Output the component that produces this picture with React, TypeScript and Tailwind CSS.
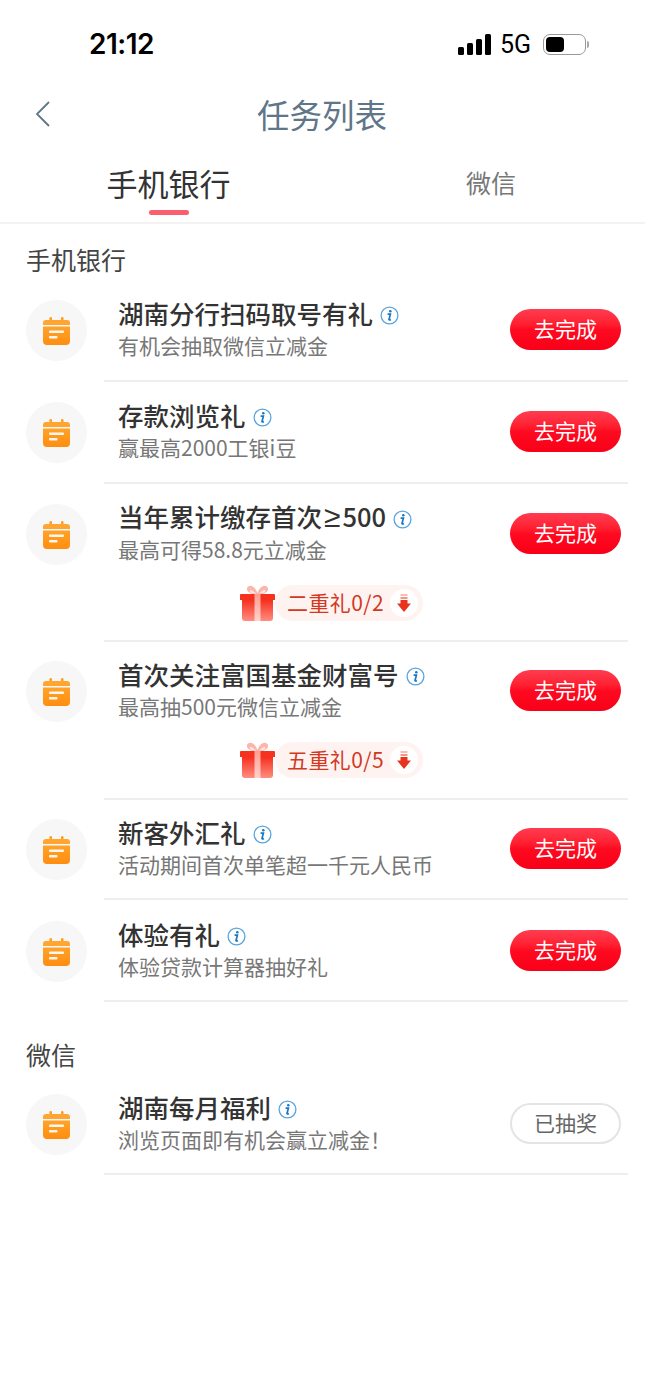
import type { ReactNode } from "react";

const CJK = "font-['Noto_Sans_CJK_SC','Noto_Sans',sans-serif]";

function CalendarIcon() {
  return (
    <svg width="27" height="28" viewBox="0 0 27 28">
      <defs>
        <linearGradient id="cal" x1="0" y1="0" x2="0" y2="1">
          <stop offset="0" stopColor="#ffa32a" />
          <stop offset="1" stopColor="#ff8d0f" />
        </linearGradient>
      </defs>
      <rect x="6.5" y="0" width="2.5" height="5" rx="1.2" fill="#ff9c22" />
      <rect x="18" y="0" width="2.5" height="5" rx="1.2" fill="#ff9c22" />
      <path d="M3 3h21a3 3 0 0 1 3 3v2H0V6a3 3 0 0 1 3-3z" fill="#ffa530" />
      <path d="M0 9.500h27V24a4 4 0 0 1-4 4H4a4 4 0 0 1-4-4z" fill="url(#cal)" />
      <rect x="6" y="13.500" width="15" height="2.500" rx="1" fill="#fff" fillOpacity="0.92" />
      <rect x="6" y="19" width="8.500" height="2.500" rx="1" fill="#fff" fillOpacity="0.92" />
    </svg>
  );
}

function InfoIcon() {
  return (
    <svg width="19" height="19" viewBox="0 0 19 19" className="mt-[4px] shrink-0">
      <circle cx="9.500" cy="9.500" r="8.400" fill="#fff" stroke="#5aa5de" strokeWidth="1.300" />
      <circle cx="10.300" cy="5.200" r="1.300" fill="#1a78c2" />
      <path d="M7.600 8.200h2.800l-1.400 5.300c-.1.500.4.700 1.900.1" fill="none" stroke="#1a78c2" strokeWidth="1.700" />
    </svg>
  );
}

function GiftIcon() {
  return (
    <svg width="35" height="36" viewBox="0 0 35 36" className="relative z-10 shrink-0">
      <defs>
        <linearGradient id="box" x1="0" y1="0" x2="0" y2="1">
          <stop offset="0" stopColor="#f5301f" />
          <stop offset="1" stopColor="#ff8d80" />
        </linearGradient>
        <linearGradient id="rib" x1="0" y1="0" x2="0" y2="1">
          <stop offset="0" stopColor="#ff9d90" />
          <stop offset="1" stopColor="#ffd3cd" />
        </linearGradient>
      </defs>
      <path
        d="M17.500 9.500C12 9.500 6.500 7.500 7 3.500 7.500 .5 11 0 13.500 2c2 1.500 3.300 4 4 6 .7-2 2-4.500 4-6C24 0 27.500.5 28 3.500c.5 4-5 6-10.500 6z"
        fill="#fbb5aa"
      />
      <path d="M11 5c2 1 4 2.500 5 3.500-2.500 0-5-.5-6-1.500-.7-1 0-2.500 1-2zM24 5c-2 1-4 2.500-5 3.500 2.500 0 5-.5 6-1.500.7-1 0-2.500-1-2z" fill="#fff" fillOpacity="0.7" />
      <path d="M1 9h33a1 1 0 0 1 1 1v5H0v-5a1 1 0 0 1 1-1z" fill="#f6321f" />
      <path d="M2 15h31v18a3 3 0 0 1-3 3H5a3 3 0 0 1-3-3z" fill="url(#box)" />
      <rect x="14.500" y="9" width="6" height="27" fill="url(#rib)" />
    </svg>
  );
}

function ArrowIcon() {
  return (
    <svg width="14" height="18" viewBox="0 0 14 18">
      <rect x="3.500" y="0" width="7" height="2" fill="#fbbcb3" />
      <rect x="3.500" y="3" width="7" height="2" fill="#f89386" />
      <path d="M3.500 6h7v3.500H14L7 18 0 9.500h3.500z" fill="#e8331f" />
    </svg>
  );
}

function StatusBar() {
  return (
    <div className="flex h-[88px] items-center justify-between pl-[89px] pr-[56px]">
      <span className="font-['Inter',sans-serif] text-[28px] font-semibold leading-none tracking-[-0.5px] text-black">
        21:12
      </span>
      <div className="flex items-center">
        <svg width="33" height="21" viewBox="0 0 33 21" fill="#000">
          <rect x="0" y="13" width="6" height="8" rx="1.500" />
          <rect x="9" y="9" width="6" height="12" rx="1.500" />
          <rect x="18" y="5" width="6" height="16" rx="1.500" />
          <rect x="27" y="0" width="6" height="21" rx="1.500" />
        </svg>
        <span className="ml-[9px] font-['Roboto',sans-serif] text-[25px] leading-none text-black">5G</span>
        <div className="ml-[12px] flex h-[21px] w-[43px] items-center rounded-[7px] border-[1.500px] border-[#999] px-[2px]">
          <div className="h-[15px] w-[18px] rounded-[4px] bg-black" />
        </div>
        <div className="ml-[1px] h-[7px] w-[2px] rounded-r-full bg-[#aaa]" />
      </div>
    </div>
  );
}

function Row({
  title,
  sub,
  reward,
  done,
  heightClass,
  padClass,
}: {
  title: ReactNode;
  sub: string;
  reward?: string;
  done?: boolean;
  heightClass: string;
  padClass: string;
}) {
  return (
    <div className={`flex pl-[26px] pr-[17px] ${heightClass}`}>
      <div className={`w-[78px] shrink-0 ${padClass}`}>
        <div className="mt-[3px] flex h-[61px] w-[61px] items-center justify-center rounded-full bg-[#f7f7f7]">
          <CalendarIcon />
        </div>
      </div>
      <div className={`min-w-0 flex-1 border-b-2 border-[#eeeeee] ${padClass}`}>
        <div className="flex items-start justify-between pl-[14px] pr-[7px]">
          <div>
            <div className="flex h-[32px] items-center gap-[7px]">
              <span className="text-[25.500px] font-medium leading-none text-[#333333]">{title}</span>
              <InfoIcon />
            </div>
            <div className="flex h-[32px] items-center text-[21px] leading-none text-[#777777]">{sub}</div>
          </div>
          {done ? (
            <div className="mt-[12px] flex h-[41px] w-[111px] items-center justify-center rounded-full border-2 border-[#e4e4e4] bg-white pb-[3px] text-[21px] leading-none text-[#666666]">
              已抽奖
            </div>
          ) : (
            <div className="mt-[12px] flex h-[41px] w-[111px] items-center justify-center rounded-full bg-gradient-to-b from-[#ff3b50] via-[#ff0a20] to-[#f80018] pb-[3px] text-[21px] leading-none text-white">
              去完成
            </div>
          )}
        </div>
        {reward && (
          <div className="mt-[20px] flex items-center pl-[136px]">
            <GiftIcon />
            <div className="flex h-[36px] w-[148px] items-center rounded-full bg-[#fff3f1] pl-[12px] pr-[5px]">
              <span className="pb-[2px] text-[21px] leading-none tracking-[0.4px] text-[#d2391f]">{reward}</span>
              <div className="ml-auto flex h-[28px] w-[28px] items-center justify-center rounded-full bg-white">
                <ArrowIcon />
              </div>
            </div>
          </div>
        )}
      </div>
    </div>
  );
}

export default function App() {
  return (
    <div className={`min-h-[1398px] w-[645px] bg-white ${CJK}`}>
      <StatusBar />

      {/* nav */}
      <div className="flex h-[54px] items-center pb-[2px] pl-[35px]">
        <svg width="15" height="26" viewBox="0 0 15 26" fill="none" stroke="#5f7689" strokeWidth="1.800">
          <path d="M14 1 2 13l12 12" />
        </svg>
        <h1 className="ml-[207px] text-[32.500px] font-normal leading-none text-[#5f7689]">任务列表</h1>
      </div>

      {/* tabs */}
      <div className="flex h-[82px] border-b-2 border-[#f2f2f2]">
        <div className="relative flex w-[337px] items-center justify-center">
          <span className="text-[31px] leading-none text-[#333333]">手机银行</span>
          <div className="absolute bottom-[7px] h-[5px] w-[40px] rounded-full bg-[#f95f6e]" />
        </div>
        <div className="flex w-[308px] items-center justify-center">
          <span className="text-[25px] leading-none text-[#777777]">微信</span>
        </div>
      </div>

      <h2 className="flex h-[56px] items-center pl-[26px] pt-[14px] text-[25px] font-normal leading-none text-[#444444]">手机银行</h2>
      <Row heightClass="h-[102px]" padClass="pt-[17px]" title="湖南分行扫码取号有礼" sub="有机会抽取微信立减金" />
      <Row heightClass="h-[102px]" padClass="pt-[17px]" title="存款浏览礼" sub="赢最高2000工银i豆" />
      <Row
        heightClass="h-[158px]"
        padClass="pt-[17px]"
        title={
          <>
            当年累计缴存首次<span className="px-[2px] font-['Liberation_Sans',sans-serif] text-[30px] leading-none">≥</span>500
          </>
        }
        sub="最高可得58.8元立减金"
        reward="二重礼0/2"
      />
      <Row heightClass="h-[158px]" padClass="pt-[16px]" title="首次关注富国基金财富号" sub="最高抽500元微信立减金" reward="五重礼0/5" />
      <Row heightClass="h-[100px]" padClass="pt-[16px]" title="新客外汇礼" sub="活动期间首次单笔超一千元人民币" />
      <Row heightClass="h-[102px]" padClass="pt-[18px]" title="体验有礼" sub="体验贷款计算器抽好礼" />

      <h2 className="flex h-[72px] items-center pl-[26px] pt-[32px] text-[25px] font-normal leading-none text-[#444444]">微信</h2>
      <Row heightClass="h-[101px]" padClass="pt-[17px]" title="湖南每月福利" sub="浏览页面即有机会赢立减金！" done />
    </div>
  );
}
